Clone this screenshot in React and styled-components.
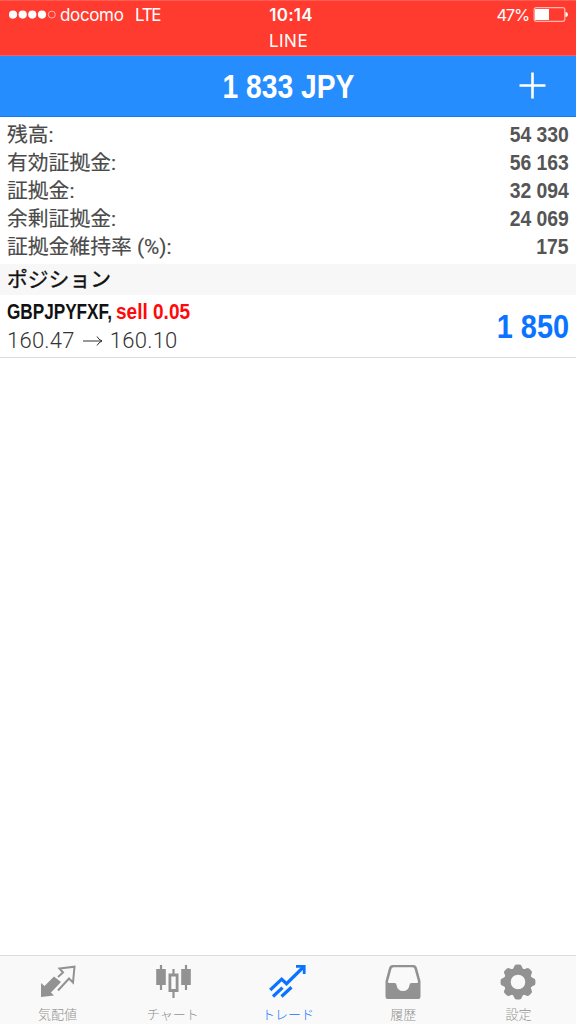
import React from 'react'
import styled, { createGlobalStyle } from 'styled-components'

const colors = {
  alert: '#ff3b30',
  bar: '#268dff',
  blue: '#0a73ff',
  red: '#ff0a0a',
  text: '#111',
  muted: '#555',
  tab: '#929292',
}

const sans = `'Liberation Sans', 'Noto Sans CJK JP', sans-serif`
const system = `Inter, 'Noto Sans CJK JP', sans-serif`
const japanese = `'Noto Sans CJK JP', sans-serif`

const GlobalStyle = createGlobalStyle`
  * {
    box-sizing: border-box;
  }

  body {
    margin: 0;
    background: #fff;
    font-family: ${sans};
  }
`

const Screen = styled.div`
  display: flex;
  flex-direction: column;
  width: 576px;
  height: 1024px;
  overflow: hidden;
  background: #fff;
`

const StatusBar = styled.header`
  flex: none;
  height: 56px;
  padding: 4px 8px 0 9px;
  border-top: 1px solid #ff5c53;
  border-bottom: 1px solid #ee5e78;
  background: ${colors.alert};
  color: #fff;
  font-family: ${system};
  font-size: 17px;
`

const StatusRow = styled.div`
  display: grid;
  grid-template-columns: 1fr auto 1fr;
  align-items: center;
  height: 20px;
  line-height: 20px;
`

const Carrier = styled.div`
  display: flex;
  align-items: center;
`

const Signal = styled.svg`
  display: block;
  margin: 0 4px 1px 0;
`

const CarrierName = styled.span`
  width: 75px;
  letter-spacing: -0.35px;
`

const Network = styled.span`
  letter-spacing: -1.3px;
`

const Clock = styled.span`
  padding-left: 5px;
  font-weight: 600;
  letter-spacing: 0.2px;
`

const Power = styled.div`
  display: flex;
  align-items: center;
  justify-content: flex-end;
  gap: 4px;
  font-size: 16.5px;
  letter-spacing: -1.2px;

  svg {
    margin-bottom: 2px;
  }
`

const CallingApp = styled.div`
  margin-top: 6px;
  text-align: center;
  line-height: 20px;
  letter-spacing: 0.5px;
`

/* squeezes the bold face down to condensed proportions */
const Condensed = styled.span`
  display: inline-block;
  flex: none;
  width: ${props => props.$width || 'auto'};
  font-family: ${sans};
  font-weight: bold;
  white-space: pre;
  color: ${props => props.$color || 'inherit'};
  transform: scaleX(${props => props.$scale});
  transform-origin: ${props => props.$origin || 'right'} center;
`

const TitleBar = styled.div`
  display: grid;
  flex: none;
  grid-template-columns: 1fr auto 1fr;
  align-items: center;
  height: 61px;
  padding-right: 30px;
  padding-left: 30px;
  border-bottom: 1px solid #177be9;
  background: ${colors.bar};
  color: #fff;
`

const Title = styled.h1`
  grid-column: 2;
  margin: 0;
  font-size: 34px;
  line-height: 40px;
`

const AddButton = styled.button`
  justify-self: end;
  width: 27px;
  height: 27px;
  margin-bottom: 2px;
  padding: 0;
  border: 0;
  background: none;
  color: #fff;
`

const Summary = styled.section`
  flex: none;
  padding: 4px 7px 3px 7px;
  color: ${colors.muted};
`

const SummaryRow = styled.div`
  display: flex;
  justify-content: space-between;
  height: 28px;
  font-size: 22.5px;
  line-height: 28px;
`

const SummaryLabel = styled.span`
  font-family: Roboto, ${japanese};
  font-size: 20.8px;
  line-height: 28px;
  color: #4a4a4a;
  -webkit-text-stroke: 0.15px currentColor;
`

const SectionTitle = styled.h2`
  flex: none;
  height: 31px;
  margin: 0;
  padding-left: 7px;
  background: #f7f7f7;
  color: ${colors.text};
  font-family: ${japanese};
  font-size: 20.8px;
  font-weight: normal;
  line-height: 29px;
  -webkit-text-stroke: 0.35px currentColor;
`

const Position = styled.div`
  display: flex;
  flex: none;
  align-items: center;
  justify-content: space-between;
  height: 63px;
  padding: 0 7px 0 7px;
  border-bottom: 1px solid #ddd;
`

const Symbol = styled.div`
  display: flex;
  color: ${colors.text};
  font-size: 22px;
  line-height: 29px;
`

const Prices = styled.div`
  display: flex;
  align-items: center;
  color: #333;
  font-family: Roboto, sans-serif;
  font-size: 22px;
  font-weight: 300;
  letter-spacing: 0.25px;
  line-height: 29px;
`

const Arrow = styled.svg`
  margin: 0 7px 0 8px;
`

const Profit = styled.div`
  font-size: 34px;
  line-height: 40px;
`

const TabBar = styled.nav`
  display: grid;
  flex: none;
  grid-template-columns: repeat(5, 1fr);
  height: 69px;
  margin-top: auto;
  border-top: 1px solid #dcdcdc;
  background: #f9f9f9;
`

const Tab = styled.a`
  display: flex;
  flex-direction: column;
  align-items: center;
  padding-top: 6px;
  color: ${props => (props.$active ? colors.blue : colors.tab)};
  font-family: ${japanese};
  font-size: 13px;
  font-weight: 300;
  line-height: 18px;

  svg {
    flex: none;
    margin-bottom: 3px;
  }
`

const QuotesIcon = () => (
  <svg width="40" height="40" viewBox="0 0 40 40" fill="none">
    <path d="M3 21 L6.5 24 L16 14.5 L23 20 L13 30.5 L16 33.5 L3 35 Z" fill="currentColor" />
    <path
      d="M20 15 L25 10.5 L21.5 6.5 L36.5 4.7 L35 20.5 L31 16.5 L20 28.5"
      stroke="currentColor"
      strokeWidth="2"
    />
  </svg>
)

const ChartIcon = () => (
  <svg width="40" height="40" viewBox="0 0 40 40" fill="none">
    <path d="M8 3V28M33 3V28M20.5 7V13M20.5 29V36" stroke="currentColor" strokeWidth="2.2" />
    <path d="M3.2 7H12.8V23H3.2ZM28.2 7H37.8V23H28.2Z" fill="currentColor" />
    <path d="M16.9 13H24.1V28.5H16.9Z" stroke="currentColor" strokeWidth="2.8" />
  </svg>
)

const TradeIcon = () => (
  <svg width="40" height="40" viewBox="0 0 40 40" fill="none" stroke="currentColor">
    <path d="M2.2 28 L13.7 17.2 L18.5 21.7 L35.5 5" strokeWidth="3.2" />
    <path d="M28 4.3 H36.2 V12" strokeWidth="2.8" />
    <path d="M5 34.5 L14.5 25.7 M13.5 34.5 L23.5 25.3" strokeWidth="3.2" />
  </svg>
)

const HistoryIcon = () => (
  <svg width="40" height="40" viewBox="0 0 40 40">
    <path
      fill="currentColor"
      fillRule="evenodd"
      d="M9.5 3H30.5Q33 3 34 6L37.5 19V34.5Q37.5 37 35.5 37H4.5Q2.5 37 2.5 34.5V19L6 6Q7 3 9.5 3Z
        M10.5 5.2Q9 5.2 8.5 6.8L5 19.5Q5 21 6 21H11.5Q13.5 21 13.5 22.9Q14.5 29 20 29Q25.5 29 26.5 22.9Q26.5 21 28.5 21H34Q35 21 35 19.5L31.5 6.8Q31 5.2 29.5 5.2Z"
    />
  </svg>
)

const SettingsIcon = () => (
  <svg width="40" height="40" viewBox="0 0 40 40">
    <g fill="currentColor">
      {[0, 45, 90, 135, 180, 225, 270, 315].map(angle =>
        <path
          key={angle}
          d="M13 8.5 Q15.8 6.8 16.2 4.6 Q16.6 2.6 18.6 2.6 H21.4 Q23.4 2.6 23.8 4.6 Q24.2 6.8 27 8.5 Z"
          transform={`rotate(${angle} 20 20)`}
        />
      )}
    </g>
    <circle cx="20" cy="20" r="10.7" fill="none" stroke="currentColor" strokeWidth="6.8" />
  </svg>
)

const balances = [
  { label: '残高:', value: '54 330' },
  { label: '有効証拠金:', value: '56 163' },
  { label: '証拠金:', value: '32 094' },
  { label: '余剰証拠金:', value: '24 069' },
  { label: '証拠金維持率 (%):', value: '175' },
]

const tabs = [
  { label: '気配値', Icon: QuotesIcon },
  { label: 'チャート', Icon: ChartIcon },
  { label: 'トレード', Icon: TradeIcon, active: true },
  { label: '履歴', Icon: HistoryIcon },
  { label: '設定', Icon: SettingsIcon },
]

const App = () => (
  <Screen>
    <GlobalStyle />

    <StatusBar>
      <StatusRow>
        <Carrier>
          <Signal width="47" height="10" viewBox="0 0 47 10" fill="#fff">
            {[4, 13.7, 23.3, 33].map(x => <circle key={x} cx={x} cy="4.6" r="4.1" />)}
            <circle cx="42.8" cy="4.6" r="3.5" fill="none" stroke="#ffb5b0" />
          </Signal>
          <CarrierName>docomo</CarrierName>
          <Network>LTE</Network>
        </Carrier>
        <Clock>10:14</Clock>
        <Power>
          <span>47%</span>
          <svg width="35" height="15" viewBox="0 0 35 15" fill="none">
            <rect x="1.2" y="0.7" width="30.6" height="13.6" rx="2" stroke="#ffb5b0" strokeWidth="1.2" />
            <path d="M2 2H16V13H2Z" fill="#fff" />
            <path d="M32.5 4.7Q35 5.5 35 7.5Q35 9.5 32.5 10.3Z" fill="#fff" />
          </svg>
        </Power>
      </StatusRow>
      <CallingApp>LINE</CallingApp>
    </StatusBar>

    <TitleBar>
      <Title>
        <Condensed $scale={0.83} $origin="center">1 833 JPY</Condensed>
      </Title>
      <AddButton aria-label="add">
        <svg width="27" height="27" viewBox="0 0 27 27" stroke="currentColor" strokeWidth="2.6">
          <path d="M0.5 13.5H26.5M13.5 0.5V26.5" />
        </svg>
      </AddButton>
    </TitleBar>

    <Summary>
      {balances.map(({ label, value }) =>
        <SummaryRow key={label}>
          <SummaryLabel>{label}</SummaryLabel>
          <Condensed $scale={0.86}>{value}</Condensed>
        </SummaryRow>
      )}
    </Summary>

    <SectionTitle>ポジション</SectionTitle>

    <Position>
      <div>
        <Symbol>
          <Condensed $scale={0.78} $origin="left" $width="109px">GBPJPYFXF,</Condensed>
          <Condensed $scale={0.865} $origin="left" $color={colors.red}>sell 0.05</Condensed>
        </Symbol>
        <Prices>
          160.47
          <Arrow width="20" height="12" viewBox="0 0 20 12" fill="none" stroke="currentColor">
            <path d="M0 6H19M14 1.5Q15.5 4.5 19 6Q15.5 7.5 14 10.5" />
          </Arrow>
          160.10
        </Prices>
      </div>
      <Profit>
        <Condensed $scale={0.85} $color={colors.blue}>1 850</Condensed>
      </Profit>
    </Position>

    <TabBar>
      {tabs.map(({ label, Icon, active }) =>
        <Tab key={label} $active={active}>
          <Icon />
          {label}
        </Tab>
      )}
    </TabBar>
  </Screen>
)

export default App
